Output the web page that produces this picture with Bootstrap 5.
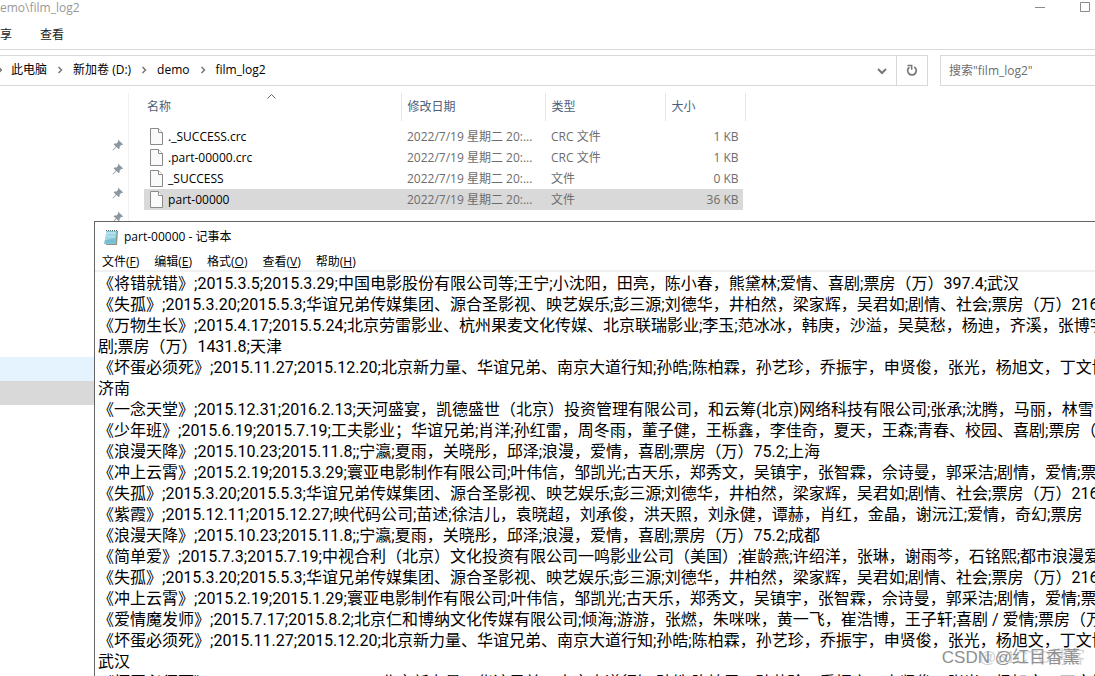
<!DOCTYPE html>
<html lang="zh-CN">
<head>
<meta charset="utf-8">
<meta name="viewport" content="width=device-width, initial-scale=1">
<title>film_log2</title>
<link href="https://cdn.jsdelivr.net/npm/bootstrap@5.3.0/dist/css/bootstrap.min.css" rel="stylesheet">
<style>
body{font:12px/20px "Open Sans","Noto Sans CJK SC",sans-serif;color:#000;background:#fff}
button,input,textarea{font:inherit;color:inherit}
.plain{border:0;background:none;padding:0}
.explorer{height:100vh}
.titlebar{height:20px;color:#999;line-height:16px}
.caption-btns{gap:34px;padding-right:4px;line-height:0}
.ribbon{height:30px;border-bottom:1px solid #d9d9d9;gap:28px;color:#222}
.addressrow{height:31px;margin-top:5px;gap:12px}
.addr{border:1px solid #d9d9d9;border-left:0}
.crumbs{gap:9px;padding-bottom:1px}
.crumbs a{color:#000;text-decoration:none}
.refresh{width:31px;border-left:1px solid #d9d9d9}
.search{width:155px;border:1px solid #d9d9d9;border-right:0;padding:0 8px;border-radius:0;outline:0}
.search::placeholder{color:#6d6d6d;opacity:1}
.sidepane{width:129px;border-right:1px solid #f0f0f0;margin-top:7px;padding-top:40px}
.sidepane li{height:24px;padding-right:4px}
.sidepane .group-gap{margin-top:8px}
.side-hover{background:#e5f3ff}
.side-current{background:#d9d9d9}
.files{width:601px;margin:7px 0 0 15px;table-layout:fixed}
.files th{height:28px;border-right:1px solid #e5e5e5;font-weight:400;color:#4c607a;padding:0 6px}
.files th:first-child{padding-left:3px}
.files td{height:21px;padding:0 6px;color:#6d6d6d;white-space:nowrap;line-height:21px}
.files td:first-child{color:#000}
.files td:first-child svg{margin-right:2px;margin-top:-2px}
.files td:last-child{text-align:right;border-right:5px solid #fff;padding-right:4px}
.files .spacer td{height:5px;line-height:5px}
.files .picked td{background:#d9d9d9}
.sort{left:123px;top:0}
.notepad{left:94px;top:221px;right:0;bottom:0;border:1px solid #646464;border-width:1px 0 0 1px;background:#fff}
.np-title{height:30px;padding-left:8px;gap:5px}
.np-menu{height:20px;border-bottom:2px solid #f0f0f0;padding-left:7px;gap:15px}
.np-menu button{line-height:20px}
.np-text{resize:none;outline:0;font:16px/21px Roboto,"Noto Sans CJK SC",sans-serif;white-space:pre;overflow:hidden;padding:1px 0 0 3px}
.stamp{right:15px;bottom:6px;font:17px/24px "Liberation Sans","Noto Sans CJK SC",sans-serif;color:#8f8f8f;pointer-events:none}
.stamp-under{right:10px;color:#d4d4d4}
</style>
</head>
<body class="overflow-hidden">
<svg class="d-none">
<symbol id="pin" viewBox="0 0 12 12"><path d="M6.2.7 11.2 5.5 10 6 9.4 5.7 7.6 7.7 7.5 9.6 6.7 10.2 4.4 8 1 11.4.5 11 3.8 7.4 1.6 5.2 2.4 4.5 4.5 4.5 6.3 2.5 5.9 1.8Z" fill="#8c979f"/></symbol>
<symbol id="doc" viewBox="0 0 13 17"><path d="M.5.5h8L12.500 4.500v12H.5Z" fill="#fafafa" stroke="#8a8a8a"/><path d="M8.500.5V4.500H12.500" fill="#fff" stroke="#8a8a8a"/></symbol>
<symbol id="sep" viewBox="0 0 6 8"><path d="M1.500 1 4.500 4 1.500 7" fill="none" stroke="#777" stroke-width="1.500"/></symbol>
</svg>
<main class="explorer position-relative d-flex flex-column overflow-hidden">
  <header class="titlebar d-flex justify-content-between">
    <span>emo\film_log2</span>
    <div class="caption-btns d-flex align-items-start">
      <button class="plain" aria-label="最小化"><svg width="11" height="13"><path d="M0 7.500h10" stroke="#8a8a8a"/></svg></button>
      <button class="plain" aria-label="最大化"><svg width="11" height="13"><path d="M.5 2.500h9v9h-9z" fill="none" stroke="#8a8a8a"/></svg></button>
    </div>
  </header>
  <nav class="ribbon d-flex align-items-center"><button class="plain">享</button><button class="plain">查看</button></nav>
  <div class="addressrow d-flex">
    <div class="addr d-flex flex-grow-1">
      <nav class="crumbs d-flex align-items-center flex-grow-1">
        <svg width="2" height="8" viewBox="3 0 2 8"><use href="#sep" width="6" height="8"/></svg>
        <a href="#">此电脑</a><svg width="8" height="8"><use href="#sep"/></svg>
        <a href="#">新加卷 (D:)</a><svg width="8" height="8"><use href="#sep"/></svg>
        <a href="#">demo</a><svg width="8" height="8"><use href="#sep"/></svg>
        <a href="#">film_log2</a>
      </nav>
      <button class="plain me-2 d-flex align-items-center" aria-label="历史记录"><svg width="12" height="8"><path d="M2 2 6 6 10 2" fill="none" stroke="#777" stroke-width="2"/></svg></button>
      <button class="plain refresh d-flex align-items-center justify-content-center" aria-label="刷新"><svg width="12" height="13"><path d="M8.200 3A4.300 4.300 0 1 1 3.400 3.200" fill="none" stroke="#777" stroke-width="1.700"/><path d="M1.500 1.500H5.700V5.700" fill="none" stroke="#777" stroke-width="1.500"/></svg></button>
    </div>
    <input class="search" type="search" aria-label="搜索" placeholder='搜索"film_log2"'>
  </div>
  <div class="d-flex flex-grow-1">
    <aside class="sidepane flex-shrink-0">
      <ul class="list-unstyled mb-0">
        <li class="d-flex align-items-center justify-content-end"><svg width="12" height="12"><use href="#pin"/></svg></li>
        <li class="d-flex align-items-center justify-content-end"><svg width="12" height="12"><use href="#pin"/></svg></li>
        <li class="d-flex align-items-center justify-content-end"><svg width="12" height="12"><use href="#pin"/></svg></li>
        <li class="d-flex align-items-center justify-content-end"><svg width="12" height="12"><use href="#pin"/></svg></li>
        <li></li><li></li><li></li><li></li><li></li>
        <li class="group-gap side-hover"></li>
        <li class="side-current"></li>
      </ul>
    </aside>
    <div>
      <table class="files">
        <colgroup><col style="width:257px"><col style="width:144px"><col style="width:120px"><col style="width:80px"></colgroup>
        <thead><tr><th class="position-relative">名称<svg class="sort position-absolute" width="9" height="7"><path d="M.5 5.500 4.500 1.500 8.500 5.500" fill="none" stroke="#666"/></svg></th><th>修改日期</th><th>类型</th><th>大小</th></tr></thead>
        <tbody>
          <tr class="spacer" aria-hidden="true"><td></td><td></td><td></td><td></td></tr>
          <tr><td><svg width="13" height="17"><use href="#doc"/></svg> ._SUCCESS.crc</td><td>2022/7/19 星期二 20:...</td><td>CRC 文件</td><td>1 KB</td></tr>
          <tr><td><svg width="13" height="17"><use href="#doc"/></svg> .part-00000.crc</td><td>2022/7/19 星期二 20:...</td><td>CRC 文件</td><td>1 KB</td></tr>
          <tr><td><svg width="13" height="17"><use href="#doc"/></svg> _SUCCESS</td><td>2022/7/19 星期二 20:...</td><td>文件</td><td>0 KB</td></tr>
          <tr class="picked"><td><svg width="13" height="17"><use href="#doc"/></svg> part-00000</td><td>2022/7/19 星期二 20:...</td><td>文件</td><td>36 KB</td></tr>
        </tbody>
      </table>
    </div>
  </div>

  <section class="notepad position-absolute d-flex flex-column">
    <div class="np-title d-flex align-items-center">
      <svg width="16" height="17" viewBox="0 0 16 17"><path d="M4 2h11l-1 14H3z" fill="#9a9384"/><path d="M3.500 2h10.500L12.500 15H1z" fill="#7cc3d8"/><path d="M3.500 3h9.500L12 9 2 11z" fill="#b5e2ee"/><path d="M3 1.500h11" stroke="#666" stroke-dasharray="1 1"/><path d="M4 6h8M3 9h8M3 12h8" stroke="#5faac2" stroke-width=".5"/></svg>
      <span>part-00000 - 记事本</span>
    </div>
    <nav class="np-menu d-flex">
      <button class="plain">文件(<u>F</u>)</button><button class="plain">编辑(<u>E</u>)</button><button class="plain">格式(<u>O</u>)</button><button class="plain">查看(<u>V</u>)</button><button class="plain">帮助(<u>H</u>)</button>
    </nav>
    <textarea class="np-text plain w-100 flex-grow-1" wrap="off" spellcheck="false" aria-label="文本编辑器">《将错就错》;2015.3.5;2015.3.29;中国电影股份有限公司等;王宁;小沈阳，田亮，陈小春，熊黛林;爱情、喜剧;票房（万）397.4;武汉
《失孤》;2015.3.20;2015.5.3;华谊兄弟传媒集团、源合圣影视、映艺娱乐;彭三源;刘德华，井柏然，梁家辉，吴君如;剧情、社会;票房（万）216
《万物生长》;2015.4.17;2015.5.24;北京劳雷影业、杭州果麦文化传媒、北京联瑞影业;李玉;范冰冰，韩庚，沙溢，吴莫愁，杨迪，齐溪，张博宇
剧;票房（万）1431.8;天津
《坏蛋必须死》;2015.11.27;2015.12.20;北京新力量、华谊兄弟、南京大道行知;孙皓;陈柏霖，孙艺珍，乔振宇，申贤俊，张光，杨旭文，丁文博
济南
《一念天堂》;2015.12.31;2016.2.13;天河盛宴，凯德盛世（北京）投资管理有限公司，和云筹(北京)网络科技有限公司;张承;沈腾，马丽，林雪
《少年班》;2015.6.19;2015.7.19;工夫影业；华谊兄弟;肖洋;孙红雷，周冬雨，董子健，王栎鑫，李佳奇，夏天，王森;青春、校园、喜剧;票房（
《浪漫天降》;2015.10.23;2015.11.8;;宁瀛;夏雨，关晓彤，邱泽;浪漫，爱情，喜剧;票房（万）75.2;上海
《冲上云霄》;2015.2.19;2015.3.29;寰亚电影制作有限公司;叶伟信，邹凯光;古天乐，郑秀文，吴镇宇，张智霖，佘诗曼，郭采洁;剧情，爱情;票
《失孤》;2015.3.20;2015.5.3;华谊兄弟传媒集团、源合圣影视、映艺娱乐;彭三源;刘德华，井柏然，梁家辉，吴君如;剧情、社会;票房（万）216
《紫霞》;2015.12.11;2015.12.27;映代码公司;苗述;徐洁儿，袁晓超，刘承俊，洪天照，刘永健，谭赫，肖红，金晶，谢沅江;爱情，奇幻;票房
《浪漫天降》;2015.10.23;2015.11.8;;宁瀛;夏雨，关晓彤，邱泽;浪漫，爱情，喜剧;票房（万）75.2;成都
《简单爱》;2015.7.3;2015.7.19;中视合利（北京）文化投资有限公司一鸣影业公司（美国）;崔龄燕;许绍洋，张琳，谢雨芩，石铭熙;都市浪漫爱
《失孤》;2015.3.20;2015.5.3;华谊兄弟传媒集团、源合圣影视、映艺娱乐;彭三源;刘德华，井柏然，梁家辉，吴君如;剧情、社会;票房（万）216
《冲上云霄》;2015.2.19;2015.1.29;寰亚电影制作有限公司;叶伟信，邹凯光;古天乐，郑秀文，吴镇宇，张智霖，佘诗曼，郭采洁;剧情，爱情;票
《爱情魔发师》;2015.7.17;2015.8.2;北京仁和博纳文化传媒有限公司;倾海;游游，张燃，朱咪咪，黄一飞，崔浩博，王子轩;喜剧 / 爱情;票房（万
《坏蛋必须死》;2015.11.27;2015.12.20;北京新力量、华谊兄弟、南京大道行知;孙皓;陈柏霖，孙艺珍，乔振宇，申贤俊，张光，杨旭文，丁文博
武汉
《坏蛋必须死》;2015.11.27;2015.12.20;北京新力量、华谊兄弟、南京大道行知;孙皓;陈柏霖，孙艺珍，乔振宇，申贤俊，张光，杨旭文，丁文博</textarea>
  </section>
  <div class="stamp stamp-under position-absolute">@51CTO博客</div>
  <div class="stamp position-absolute">CSDN @红目香薰</div>
</main>
<script src="https://cdn.jsdelivr.net/npm/bootstrap@5.3.0/dist/js/bootstrap.bundle.min.js"></script>
</body>
</html>
